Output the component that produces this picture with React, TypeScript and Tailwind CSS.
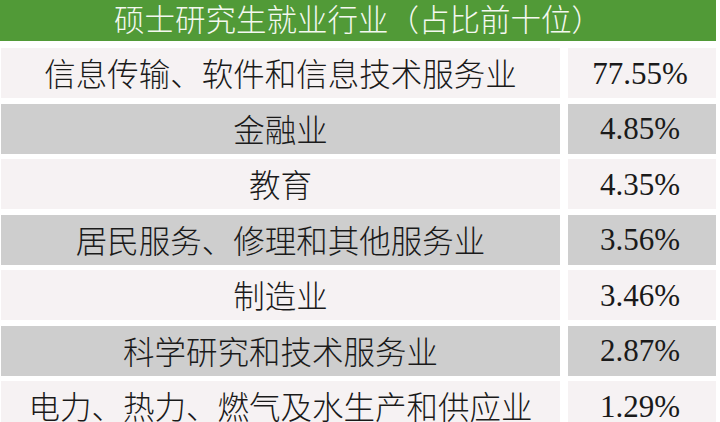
import React from "react";

const rows: [string, string][] = [
  ["信息传输、软件和信息技术服务业", "77.55%"],
  ["金融业", "4.85%"],
  ["教育", "4.35%"],
  ["居民服务、修理和其他服务业", "3.56%"],
  ["制造业", "3.46%"],
  ["科学研究和技术服务业", "2.87%"],
  ["电力、热力、燃气及水生产和供应业", "1.29%"],
];

export default function App() {
  return (
    <div className="w-[720px] h-[422px] overflow-hidden bg-white">
      <div
        className="w-[716px] h-[41px] pb-[3px] bg-[#519a37] flex items-center justify-center text-[30.5px] leading-[1.1] font-light text-[#f4f8f0]"
        style={{ fontFamily: '"Noto Sans CJK SC", "Noto Sans", sans-serif' }}
      >
        硕士研究生就业行业（占比前十位）
      </div>
      <div className="mt-[7px] flex flex-col gap-[5.5px]">
        {rows.map(([name, pct], i) => {
          const bg = i % 2 === 0 ? "bg-[#f6f2f3]" : "bg-[#cecece]";
          return (
            <div key={i} className="flex gap-[8px] h-[50px] shrink-0">
              <div
                className={`ml-[1px] w-[559px] ${bg} flex items-center justify-center text-[31.5px] leading-none font-light text-[#1a1a1a]`}
                style={{ fontFamily: '"Noto Sans CJK SC", "Noto Sans", sans-serif' }}
              >
                {name}
              </div>
              <div
                className={`w-[148px] ${bg} flex items-center justify-center text-[31px] leading-none text-[#1a1a1a] pr-[4px]`}
                style={{ fontFamily: '"Liberation Serif", serif' }}
              >
                {pct}
              </div>
            </div>
          );
        })}
      </div>
    </div>
  );
}
